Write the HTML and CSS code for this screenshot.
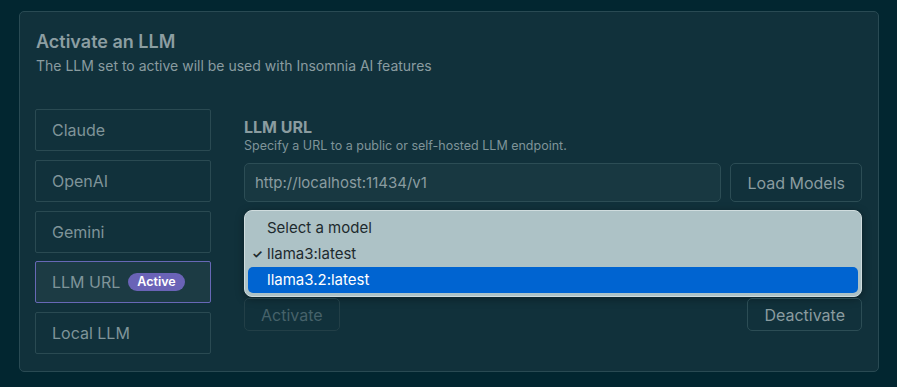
FILE: index.html
```html
<!DOCTYPE html>
<html lang="en">
<head>
  <meta charset="UTF-8" />
  <title>AI Settings - Insomnia</title>
  <meta name="viewport" content="width=device-width, initial-scale=1.0" />
  <link rel="stylesheet" href="styles.css">
</head>
<body>
  <div class="panel">
    <h1>Activate an LLM</h1>
    <p class="subtitle">The LLM set to active will be used with Insomnia AI features</p>

    <div class="content">
      <div class="providers">
        <div class="tab">Claude</div>
        <div class="tab">OpenAI</div>
        <div class="tab">Gemini</div>
        <div class="tab selected">LLM URL <span class="badge">Active</span></div>
        <div class="tab">Local LLM</div>
      </div>

      <div class="config">
        <h2>LLM URL</h2>
        <p class="hint">Specify a URL to a public or self-hosted LLM endpoint.</p>

        <div class="url-row">
          <div class="url-input">http://localhost:11434/v1</div>
          <button class="btn">Load Models</button>
        </div>

        <ul class="listbox">
          <li class="option">Select a model</li>
          <li class="option checked">llama3:latest</li>
          <li class="option highlighted">llama3.2:latest</li>
        </ul>

        <div class="actions">
          <button class="btn small" disabled>Activate</button>
          <button class="btn small">Deactivate</button>
        </div>
      </div>
    </div>
  </div>
</body>
</html>
```

FILE: styles.css
```css
* {
  margin: 0;
  padding: 0;
  box-sizing: border-box;
  font-family: 'Inter', 'Noto Sans', sans-serif;
}
body {
  background: #022630;
  padding: 11px 18px 0 19px;
  height: 387px;
  overflow: hidden;
}
.panel {
  background: #11313b;
  border: 1px solid #294a53;
  border-radius: 5px;
  padding: 19px 16px 16px 15px;
  height: 361px;
}
h1 {
  margin-left: 1px;
  font-size: 18px;
  line-height: 22px;
  font-weight: 600;
  color: #8c9ea2;
}
.subtitle {
  margin: 4px 0 0 1px;
  font-size: 14px;
  line-height: 18px;
  color: #8a9ca0;
}
.content {
  display: flex;
  gap: 33px;
  margin-top: 34px;
}
.providers {
  width: 176px;
  display: flex;
  flex-direction: column;
  gap: 8.75px;
}
.tab {
  height: 42px;
  border: 1px solid #2a4a52;
  border-radius: 2px;
  padding: 0 16px;
  display: flex;
  align-items: center;
  font-size: 16px;
  color: #7f9499;
}
.tab.selected {
  background: #1c3b44;
  border-color: #6768b6;
}
.badge {
  margin-left: 8px;
  background: #6a63b7;
  color: #fff;
  font-size: 12.5px;
  font-weight: 600;
  line-height: 18px;
  padding: 0 9px;
  border-radius: 9px;
}
.config {
  flex: 1;
  padding-top: 9px;
}
h2 {
  font-size: 16px;
  line-height: 18px;
  font-weight: 700;
  color: #8a9ca0;
}
.hint {
  margin-top: 2px;
  font-size: 12.5px;
  line-height: 16px;
  color: #7f9499;
}
.url-row {
  display: flex;
  gap: 9px;
  margin-top: 9px;
}
.url-input {
  flex: 1;
  height: 39px;
  border: 1px solid #2c4d55;
  border-radius: 5px;
  background: #183841;
  padding: 0 10px;
  display: flex;
  align-items: center;
  font-size: 15px;
  color: #8a9ca0;
}
.btn {
  height: 39px;
  padding: 0 16px;
  background: transparent;
  border: 1px solid #2c4d55;
  border-radius: 5px;
  font-size: 16px;
  color: #8a9ca0;
}
.btn.small {
  height: 33px;
}
.btn:disabled {
  color: #46626a;
  border-color: #223f47;
}
.listbox {
  list-style: none;
  margin-top: 8px;
  height: 87px;
  background: #adc2c6;
  border: 1px solid #cfdcde;
  border-radius: 8px;
  padding: 4px 3px;
  box-shadow: 0 2px 8px rgba(0, 0, 0, 0.35);
}
.option {
  height: 26px;
  line-height: 26px;
  padding-left: 19px;
  font-size: 15px;
  color: #1d2a2e;
  border-radius: 5px;
  position: relative;
}
.option.checked::before {
  content: "\2713";
  position: absolute;
  left: 4px;
  font-size: 12px;
  font-weight: 700;
}
.option.highlighted {
  background: #0064d1;
  color: #fff;
}
.actions {
  display: flex;
  justify-content: space-between;
  margin-top: 1px;
}
```
